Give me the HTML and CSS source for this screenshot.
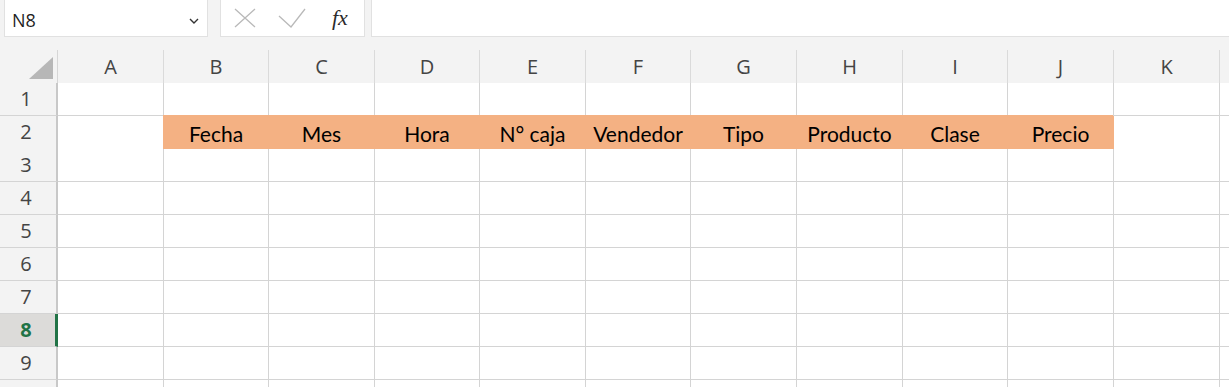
FILE: index.html
```html
<!DOCTYPE html>
<html lang="es">
<head>
<meta charset="utf-8">
<title>Excel</title>
<link rel="stylesheet" href="styles.css">
</head>
<body>
<div class="app">
  <div class="topbar">
    <div class="namebox">
      <span class="name">N8</span>
      <svg class="chev" width="10" height="6" viewBox="0 0 10 6"><path d="M1 1 L5 5 L9 1" fill="none" stroke="#333" stroke-width="1.4"/></svg>
    </div>
    <div class="fxbox">
      <svg class="ico" width="22" height="20" viewBox="0 0 22 20"><path d="M1 1 L21 19 M21 1 L1 19" fill="none" stroke="#b9b9b9" stroke-width="1.3"/></svg>
      <svg class="ico" width="28" height="20" viewBox="0 0 28 20"><path d="M1 8 L13 19 L27 1" fill="none" stroke="#b9b9b9" stroke-width="1.3"/></svg>
      <span class="fx">fx</span>
    </div>
    <div class="formula"></div>
  </div>

  <div class="sheet">
    <div class="hrow">
      <div class="corner"><svg width="24" height="22" viewBox="0 0 24 22"><polygon points="24,0 24,22 0,22" fill="#b7b7b7"/></svg></div>
      <div class="ch">A</div><div class="ch">B</div><div class="ch">C</div><div class="ch">D</div><div class="ch">E</div><div class="ch">F</div><div class="ch">G</div><div class="ch">H</div><div class="ch">I</div><div class="ch">J</div><div class="ch">K</div><div class="ch"></div>
    </div>

    <div class="row">
      <div class="rh">1</div>
      <div class="c"></div><div class="c"></div><div class="c"></div><div class="c"></div><div class="c"></div><div class="c"></div><div class="c"></div><div class="c"></div><div class="c"></div><div class="c"></div><div class="c"></div><div class="c"></div>
    </div>
    <div class="row">
      <div class="rh">2</div>
      <div class="c"></div>
      <div class="c fill">Fecha</div>
      <div class="c fill">Mes</div>
      <div class="c fill">Hora</div>
      <div class="c fill">N° caja</div>
      <div class="c fill">Vendedor</div>
      <div class="c fill">Tipo</div>
      <div class="c fill">Producto</div>
      <div class="c fill">Clase</div>
      <div class="c fill">Precio</div>
      <div class="c"></div><div class="c"></div>
    </div>
    <div class="row">
      <div class="rh">3</div>
      <div class="c"></div><div class="c"></div><div class="c"></div><div class="c"></div><div class="c"></div><div class="c"></div><div class="c"></div><div class="c"></div><div class="c"></div><div class="c"></div><div class="c"></div><div class="c"></div>
    </div>
    <div class="row">
      <div class="rh">4</div>
      <div class="c"></div><div class="c"></div><div class="c"></div><div class="c"></div><div class="c"></div><div class="c"></div><div class="c"></div><div class="c"></div><div class="c"></div><div class="c"></div><div class="c"></div><div class="c"></div>
    </div>
    <div class="row">
      <div class="rh">5</div>
      <div class="c"></div><div class="c"></div><div class="c"></div><div class="c"></div><div class="c"></div><div class="c"></div><div class="c"></div><div class="c"></div><div class="c"></div><div class="c"></div><div class="c"></div><div class="c"></div>
    </div>
    <div class="row">
      <div class="rh">6</div>
      <div class="c"></div><div class="c"></div><div class="c"></div><div class="c"></div><div class="c"></div><div class="c"></div><div class="c"></div><div class="c"></div><div class="c"></div><div class="c"></div><div class="c"></div><div class="c"></div>
    </div>
    <div class="row">
      <div class="rh">7</div>
      <div class="c"></div><div class="c"></div><div class="c"></div><div class="c"></div><div class="c"></div><div class="c"></div><div class="c"></div><div class="c"></div><div class="c"></div><div class="c"></div><div class="c"></div><div class="c"></div>
    </div>
    <div class="row">
      <div class="rh active">8</div>
      <div class="c"></div><div class="c"></div><div class="c"></div><div class="c"></div><div class="c"></div><div class="c"></div><div class="c"></div><div class="c"></div><div class="c"></div><div class="c"></div><div class="c"></div><div class="c"></div>
    </div>
    <div class="row">
      <div class="rh">9</div>
      <div class="c"></div><div class="c"></div><div class="c"></div><div class="c"></div><div class="c"></div><div class="c"></div><div class="c"></div><div class="c"></div><div class="c"></div><div class="c"></div><div class="c"></div><div class="c"></div>
    </div>
    <div class="row">
      <div class="rh"></div>
      <div class="c"></div><div class="c"></div><div class="c"></div><div class="c"></div><div class="c"></div><div class="c"></div><div class="c"></div><div class="c"></div><div class="c"></div><div class="c"></div><div class="c"></div><div class="c"></div>
    </div>
  </div>
</div>
</body>
</html>
```

FILE: styles.css
```css
* { box-sizing: border-box; }
html, body {
  margin: 0;
  padding: 0;
  background: #f3f3f3;
  overflow: hidden;
  height: 387px;
}
.app {
  width: 1229px;
  height: 387px;
  overflow: hidden;
  font-family: "Open Sans", "Noto Sans", sans-serif;
}
.topbar {
  display: flex;
  height: 37px;
}
.namebox {
  margin-left: 4px;
  width: 204px;
  height: 37px;
  background: #fff;
  border: 1px solid #e1e1e1;
  border-top: none;
  display: flex;
  align-items: center;
  justify-content: space-between;
  padding: 0 8px 0 7px;
}
.name {
  font-size: 18px;
  color: #1f1f1f;
  line-height: 1;
  padding-top: 3px;
}
.chev { margin-top: 5px; }
.fxbox {
  margin-left: 12px;
  width: 145px;
  height: 37px;
  background: #fff;
  border: 1px solid #e1e1e1;
  border-top: none;
  display: flex;
  align-items: flex-start;
  padding: 8px 0 0 13px;
  gap: 22px;
}
.ico { display: block; }
.fx {
  font-family: "Liberation Serif", "DejaVu Serif", serif;
  font-style: italic;
  font-size: 22px;
  line-height: 20px;
  color: #2b2b2b;
  margin-left: 4px;
}
.formula {
  margin-left: 6px;
  flex: 1;
  height: 37px;
  background: #fff;
  border: 1px solid #e1e1e1;
  border-top: none;
  border-right: none;
}
.sheet {
  margin-top: 13px;
  width: 1326px;
}
.hrow, .row {
  display: grid;
  grid-template-columns: 58px 106px 105px 106px 105px 106px 105px 106px 106px 105px 106px 106px 106px;
}
.hrow { height: 33px; }
.corner {
  border-right: 1px solid #d6d6d6;
  border-bottom: 1px solid #bfbfbf;
  display: flex;
  justify-content: flex-end;
  align-items: flex-end;
  padding: 0 4px 4px 0;
}
.corner svg { display: block; }
.ch {
  border-right: 1px solid #dadada;
  border-bottom: 1px solid #bfbfbf;
  font-size: 20px;
  line-height: 32px;
  text-align: center;
  color: #444;
  padding-top: 1px;
}
.row { height: 33px; }
.rh {
  background: #f3f3f3;
  border-right: 2px solid #c8c8c8;
  border-bottom: 1px solid #d4d4d4;
  font-size: 20px;
  line-height: 32px;
  text-align: center;
  color: #444;
  padding-right: 4px;
}
.rh.active {
  background: #dcdbd9;
  border-right: 3px solid #217346;
  color: #217346;
  font-weight: 700;
  padding-right: 3px;
}
.c {
  background: #fff;
  border-right: 1px solid #d4d4d4;
  border-bottom: 1px solid #d4d4d4;
  font-family: Lato, "Liberation Sans", sans-serif;
  font-size: 21px;
  line-height: 32px;
  text-align: center;
  color: #000;
  white-space: nowrap;
  padding-top: 2px;
}
.c.fill {
  background: #f4b183;
  border-right-color: #f4b183;
  box-shadow: -1px -1px 0 #f4b183;
}
```
